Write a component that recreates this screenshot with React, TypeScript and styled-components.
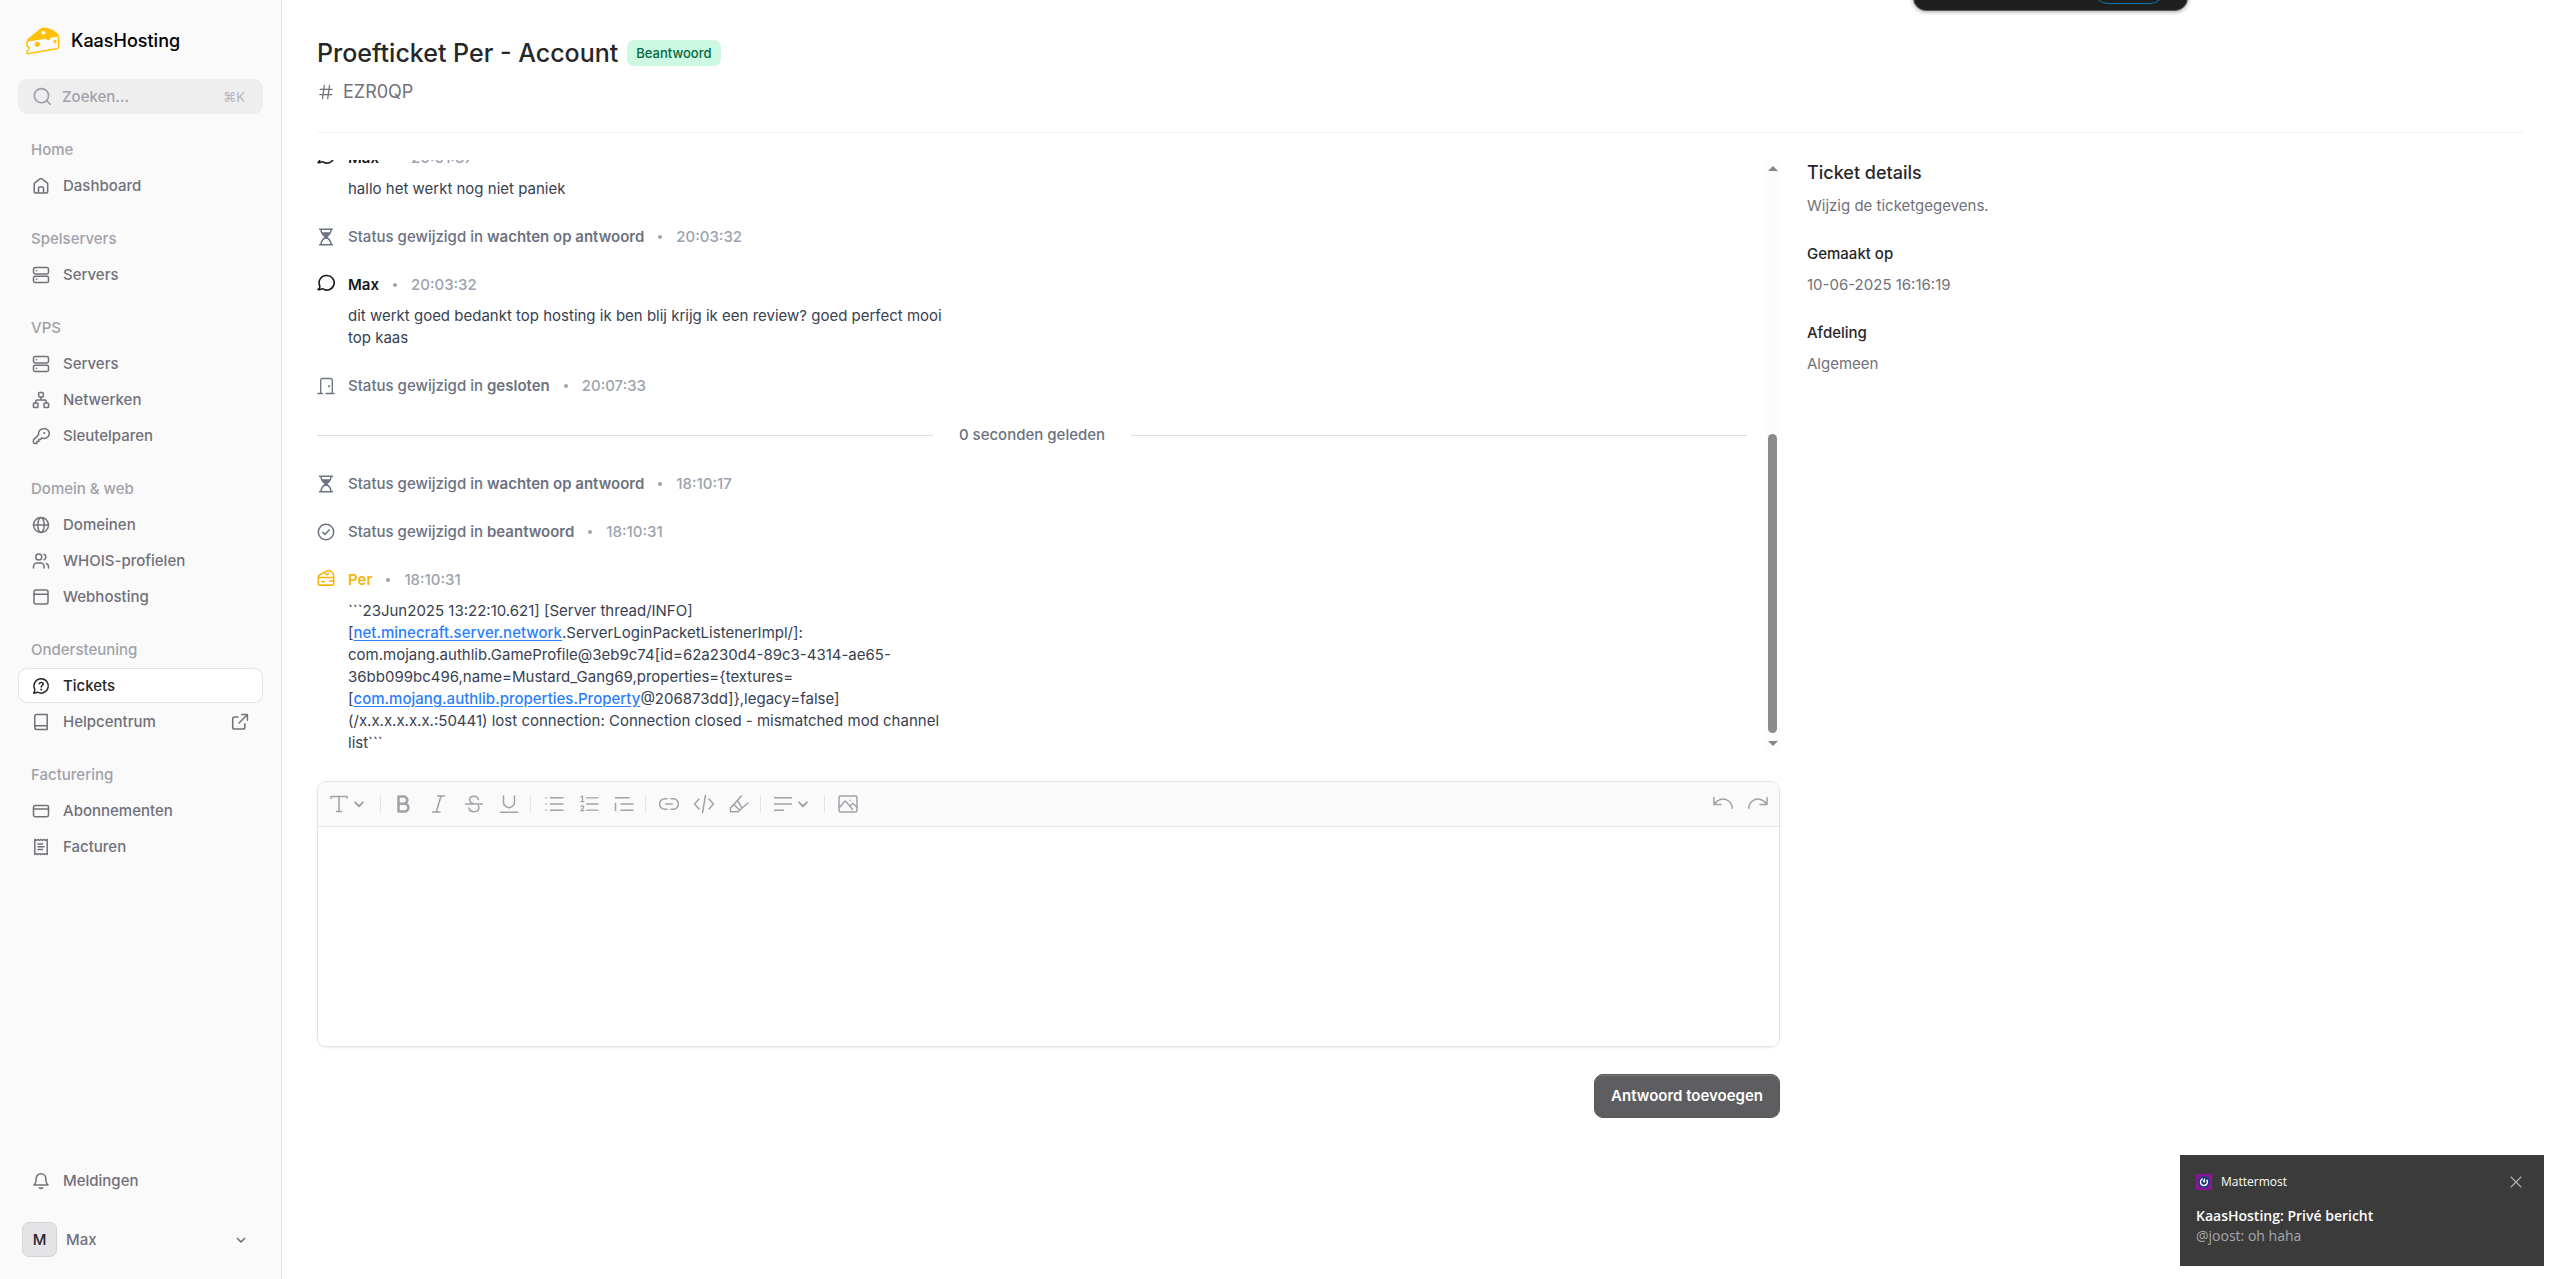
import React from "react";
import styled, { createGlobalStyle, css } from "styled-components";

const color = {
  ink: "#27272a",
  muted: "#71717a",
  faint: "#a1a1aa",
  body: "#374151",
  slate: "#6b7280",
  time: "#9ca3af",
  line: "#e4e4e7",
  panel: "#fafafa",
  cheese: "#f5b50b",
  logo: "#ffc107",
  link: "#2b7fff",
};

const GlobalStyle = createGlobalStyle`
  *, *::before, *::after { box-sizing: border-box; }
  body {
    margin: 0;
    background: #fff;
    color: ${color.ink};
    font-family: Inter, "Liberation Sans", "DejaVu Sans", sans-serif;
    font-size: 15px;
    line-height: 22px;
  }
  h1, h2, p, dl, dt, dd, ul, ol { margin: 0; padding: 0; }
  ul, ol { list-style: none; }
  a { color: inherit; text-decoration: none; }
  button, input, textarea { font: inherit; color: inherit; }
`;

/* ---------- icons ---------- */

const Svg = styled.svg<{ $size?: number }>`
  display: block;
  flex: none;
  width: ${(p) => p.$size ?? 18}px;
  height: ${(p) => p.$size ?? 18}px;
  fill: none;
  stroke: currentColor;
  stroke-width: 1.5;
  stroke-linecap: round;
  stroke-linejoin: round;
`;

const shapes = {
  search: <path d="M15.5 15.5 12.3 12.3M14 7.8a6.4 6.4 0 1 1-12.8 0 6.4 6.4 0 0 1 12.8 0Z" />,
  home: (
    <path d="M2.2 7.2c0-.7.3-1.2.8-1.6l5-3.7c.6-.4 1.3-.4 1.9 0l5 3.7c.5.4.8.9.8 1.6v7c0 1.1-.9 1.9-1.9 1.9H4.1c-1 0-1.9-.8-1.9-1.9ZM6.5 16v-4.700c0-.7.5-1.200 1.200-1.200h2.600c.7 0 1.200.5 1.200 1.200V16" />
  ),
  server: (
    <>
      <rect x="1.500" y="1.600" width="15" height="6.300" rx="1.600" />
      <rect x="1.500" y="10.200" width="15" height="6.300" rx="1.600" />
      <path d="M4.500 4.800h.2M4.500 13.300h.2" />
    </>
  ),
  network: (
    <>
      <rect x="6.700" y="1.400" width="4.600" height="4.600" rx=".9" />
      <rect x="1.400" y="12" width="4.600" height="4.600" rx=".9" />
      <rect x="12" y="12" width="4.600" height="4.600" rx=".9" />
      <path d="M9 6v3M3.700 12v-1.300c0-.9.7-1.600 1.600-1.600h7.400c.9 0 1.600.7 1.600 1.600V12" />
    </>
  ),
  key: (
    <>
      <path d="M11.400 1.700a4.900 4.900 0 0 0-4.800 6L1.900 12.400c-.3.300-.5.700-.5 1.100v1.700c0 .7.500 1.200 1.200 1.200h2.200v-2h2v-2h1.600l1.600-1.600a4.900 4.900 0 1 0 1.400-9.100Z" />
      <path d="M12.200 5.900h.1" strokeWidth="2" />
    </>
  ),
  globe: (
    <>
      <circle cx="9" cy="9" r="7.500" />
      <ellipse cx="9" cy="9" rx="3.200" ry="7.500" />
      <path d="M1.500 9h15" />
    </>
  ),
  users: (
    <>
      <circle cx="6.800" cy="5" r="3" />
      <path d="M1.500 16v-1.500a3.500 3.500 0 0 1 3.500-3.500h3.600a3.500 3.500 0 0 1 3.500 3.500V16M12 2.200a3 3 0 0 1 0 5.600M14.300 11.500c1.400.5 2.200 1.700 2.200 3.100V16" />
    </>
  ),
  browser: (
    <>
      <rect x="2" y="2" width="14" height="14" rx="2" />
      <path d="M2 6.300h14" />
    </>
  ),
  ticket: (
    <>
      <path d="M9.200 1.700a7.200 7.200 0 0 0-6.500 10.400c.4 1.300-.2 3-1.100 4 1.500.1 3-.2 4-.9A7.200 7.200 0 1 0 9.200 1.700Z" />
      <path d="M7.200 6.800c.3-.9 1-1.400 2-1.400 1.100 0 2 .7 2 1.700 0 1.300-1.800 1.400-2 2.800" />
      <path d="M9.200 12.500h.1" strokeWidth="1.900" />
    </>
  ),
  book: <path d="M2.800 14.600V3.500c0-1.100.8-1.900 1.900-1.900h10.500v14.800H4.600a1.800 1.800 0 0 1 0-3.700h10.600" />,
  external: <path d="M10.800 1.600h5.600v5.600M16.200 1.800 8 10M7 3.900H3.600c-1.100 0-1.900.9-1.900 1.900v8.400c0 1.100.8 1.900 1.900 1.900H12c1.100 0 1.900-.8 1.900-1.900v-3.500" />,
  card: (
    <>
      <rect x="1.500" y="3.500" width="15" height="11.200" rx="1.600" />
      <path d="M1.500 7h15" />
    </>
  ),
  receipt: (
    <>
      <path d="M2.800 1.500v15l1.500-.8 1.600.8 1.600-.8 1.500.8 1.600-.8 1.600.8 1.600-.8 1.400.8v-15l-1.400.8-1.600-.8-1.600.8-1.600-.8-1.500.8-1.600-.8-1.600.8Z" />
      <path d="M6 6h4.500M6 8.800h6M6 11.600h4.500" />
    </>
  ),
  bell: <path d="M9 1.700a4.800 4.800 0 0 0-4.800 4.800c0 4-.8 5.400-2.300 6.500h14.200c-1.500-1.100-2.300-2.500-2.300-6.500A4.800 4.800 0 0 0 9 1.700ZM7.400 15.800c.8.900 2.400.9 3.200 0" />,
  chevron: <path d="m5.500 7.500 3.500 3.500 3.500-3.500" strokeWidth="1.700" />,
  hash: <path d="M7.300 2.500 5.500 15.500M12.500 2.500l-1.800 13M3.200 6.300h12M2.800 11.700h12" strokeWidth="1.300" />,
  hourglass: (
    <>
      <path d="M2.600 1.200h12.800M2.600 16.800h12.800M4 1.500c0 4 2 5.700 5 7.500-3 1.800-5 3.500-5 7.500M14 1.500c0 4-2 5.700-5 7.500 3 1.800 5 3.500 5 7.500" />
      <path d="M5 4.300h8c-.7 2-2 3.300-4 4.500-2-1.200-3.300-2.500-4-4.500Z" fill="currentColor" stroke="none" />
    </>
  ),
  chat: <path d="M9.400 1.500a7.300 7.300 0 0 0-6.700 10.300c.3 1.200-.4 2.900-1.600 3.700 1.800.4 3.300 0 4.500-.8a7.300 7.300 0 1 0 3.800-13.200Z" strokeWidth="1.600" />,
  door: (
    <>
      <path d="M3.700 16.300V3.200c0-1 .7-1.700 1.700-1.700h8.200c1 0 1.700.7 1.700 1.700v13.100M1 16.500h4.500M9 16.500h8" strokeWidth="1.300" />
      <path d="M12 9.200h.1" strokeWidth="2" />
    </>
  ),
  check: (
    <>
      <circle cx="9" cy="9" r="7.700" />
      <path d="m5.800 9.200 2.200 2.200 4.300-4.700" />
    </>
  ),
  cheese: (
    <>
      <path d="M1.300 8v6.800c0 .8.600 1.300 1.300 1.300h12.800c.7 0 1.300-.5 1.300-1.300V8M1.300 8.500h15.400M1.300 8.500c0-1.300.8-2.400 2-3l7-3.600c2.600-.8 6.400 1.200 6.400 5v1.600" strokeWidth="1.600" />
      <path d="M8.300 4.500c.4 1.600 2.600 1.600 2.900 0M12.500 12h4M5 12.600h2.200" strokeWidth="1.600" />
    </>
  ),
  type: <path d="M2 4.200V2.500h16v1.700M10 2.500v15M7.500 17.500h5" />,
  bold: <path d="M4.500 2.500h5.200a3.600 3.600 0 0 1 0 7.200H4.500h6a3.900 3.900 0 0 1 0 7.800h-6Z" strokeWidth="2.600" />,
  italic: <path d="M8.500 2h7M3.500 18h7.500M12 2 7.300 18" />,
  strike: <path d="M14.500 5.500C14 3.500 12.300 2.200 10 2.200c-2.700 0-4.400 1.500-4.400 3.500 0 2.200 2 3.300 4.400 4.300M5 14c.4 2.200 2.300 3.700 5 3.700 3 0 4.900-1.500 4.900-3.900 0-.8-.2-1.500-.7-2.100M1.500 10h17" />,
  underline: <path d="M4.500 2v6.200a5.500 5.500 0 0 0 11 0V2M1.500 18.300h17" />,
  bullets: <path d="M6.500 3.800H19M6.500 10H19M6.500 16.200H19M2 3.800h.1M2 10h.1M2 16.200h.1" />,
  numbers: <path d="M7.500 3.800H19M7.500 10H19M7.500 16.200H19M2 3l1.500-1v5.500M2 7.600h3M2 12.500c.5-.9 2.700-.8 2.700.6 0 1-1.800 1.700-2.700 3.500h3" strokeWidth="1.300" />,
  indent: <path d="M1.500 3.800h13.500M7 10h12M7 16.200h12M1.500 9.500v7" />,
  link: <path d="M8 4.800H5.800a5.200 5.200 0 0 0 0 10.400H8M12 4.800h2.200a5.200 5.200 0 0 1 0 10.400H12M6.800 10h6.400" />,
  code: <path d="m5 5-4.500 5L5 15M15 5l4.500 5L15 15M11.500 1.500l-3 17" />,
  marker: <path d="M12.300 2 4.800 10.500M4.800 10.500 1.500 14v3.800h7.600l3-2.800L19 9M4.800 10.500l5 4.800M9 7.500l4 6.300" />,
  align: <path d="M1.500 3.800h17M1.500 10h17M1.500 16.200h9" />,
  image: (
    <>
      <rect x="1" y="2" width="18" height="16" rx="1.500" />
      <path d="m1.500 13.500 5-6c.4-.5 1-.5 1.500 0l6.500 8M12 12l2.200-2c.5-.5 1-.4 1.400 0l3.400 3.500M12.300 6.200h.1" />
    </>
  ),
  undo: <path d="M1 3.500v7h7M1.500 10C4.500 5 10 4 14.500 6.300c3 1.600 4.600 4.200 4.700 8" />,
  redo: <path d="M19 3.500v7h-7M18.500 10C15.500 5 10 4 5.500 6.300c-3 1.600-4.600 4.200-4.700 8" />,
  close: <path d="m1.500 1.500 15 15M16.500 1.500l-15 15" strokeWidth="1.600" />,
};
type IconName = keyof typeof shapes;

const Icon = ({ name, size = 18, box = 18 }: { name: IconName; size?: number; box?: number }) => (
  <Svg $size={size} viewBox={`0 0 ${box} ${box}`} aria-hidden="true">
    {shapes[name]}
  </Svg>
);

/* ---------- sidebar ---------- */

const Shell = styled.div`
  display: flex;
  min-height: 100vh;
`;

const Sidebar = styled.aside`
  position: sticky;
  top: 0;
  display: flex;
  flex: none;
  flex-direction: column;
  width: 282px;
  height: 100vh;
  padding: 18px;
  background: ${color.panel};
  border-right: 1px solid ${color.line};
  font-weight: 500;
`;

const Brand = styled.a`
  display: flex;
  align-items: center;
  gap: 11px;
  height: 45px;
  padding-left: 8px;
  color: #000;
  font-size: 18px;
`;

const Logo = styled.svg`
  width: 34px;
  height: 28px;
`;

const Search = styled.label`
  display: flex;
  align-items: center;
  gap: 9px;
  height: 35px;
  margin: 16px 0 18px;
  padding: 0 18px 0 15px;
  border-radius: 9px;
  background: #eeeeee;
  color: ${color.faint};
`;

const SearchInput = styled.input`
  flex: 1;
  min-width: 0;
  padding: 0;
  border: 0;
  outline: 0;
  background: none;
  &::placeholder {
    color: ${color.faint};
    opacity: 1;
  }
`;

const Shortcut = styled.kbd`
  color: #b4b4ba;
  font: 400 13px Inter, "DejaVu Sans", sans-serif;
`;

const NavGroups = styled.nav`
  display: flex;
  flex-direction: column;
  gap: 18px;
`;

const NavList = styled.ul`
  display: flex;
  flex-direction: column;
  gap: 1px;
`;

const NavLabel = styled.h2`
  padding: 7px 13px;
  color: ${color.faint};
  font-size: 15px;
  font-weight: 500;
  line-height: 22px;
`;

const NavLink = styled.a<{ $active?: boolean }>`
  display: flex;
  align-items: center;
  gap: 13px;
  height: 35px;
  padding: 0 13px;
  border: 1px solid transparent;
  border-radius: 9px;
  color: ${color.muted};
  ${(p) =>
    p.$active &&
    css`
      border-color: ${color.line};
      background: #fff;
      color: ${color.ink};
    `}
`;

const NavText = styled.span`
  flex: 1;
`;

const SidebarFoot = styled.div`
  display: flex;
  flex-direction: column;
  gap: 20px;
  margin-top: auto;
`;

const Profile = styled.button`
  display: flex;
  align-items: center;
  gap: 9px;
  padding: 4px 13px 4px 4px;
  border: 0;
  border-radius: 9px;
  background: none;
  color: ${color.muted};
  font-weight: 500;
  text-align: left;
`;

const Avatar = styled.span`
  display: grid;
  place-items: center;
  width: 35px;
  height: 35px;
  border: 1px solid #d4d4d8;
  border-radius: 7px;
  background: #e4e4e7;
  color: ${color.ink};
`;

type NavItem = { icon: IconName; text: string; active?: boolean; external?: boolean };
const nav: { label: string; items: NavItem[] }[] = [
  { label: "Home", items: [{ icon: "home", text: "Dashboard" }] },
  { label: "Spelservers", items: [{ icon: "server", text: "Servers" }] },
  {
    label: "VPS",
    items: [
      { icon: "server", text: "Servers" },
      { icon: "network", text: "Netwerken" },
      { icon: "key", text: "Sleutelparen" },
    ],
  },
  {
    label: "Domein & web",
    items: [
      { icon: "globe", text: "Domeinen" },
      { icon: "users", text: "WHOIS-profielen" },
      { icon: "browser", text: "Webhosting" },
    ],
  },
  {
    label: "Ondersteuning",
    items: [
      { icon: "ticket", text: "Tickets", active: true },
      { icon: "book", text: "Helpcentrum", external: true },
    ],
  },
  {
    label: "Facturering",
    items: [
      { icon: "card", text: "Abonnementen" },
      { icon: "receipt", text: "Facturen" },
    ],
  },
];

const CheeseLogo = () => (
  <Logo viewBox="0 0 34 28" aria-hidden="true">
    <path
      fill={color.logo}
      fillRule="evenodd"
      d="M1 12.500 14.500 1.500c1.300-1 3-1.200 4.800-.9 6 1 12.700 4.600 14 8.900L24.500 10.800c.3 2.700-3.700 3.400-4.200.9L1 14.800ZM17.500 4c-2.800 0-2.800 3.400 0 3.400s2.800-3.400 0-3.400Z"
    />
    <path
      fill="none"
      stroke={color.logo}
      strokeWidth="1.500"
      strokeLinejoin="round"
      d="M1 14v5.200c2.800.3 3.200 3.300.1 4.300v3.300L31 21.800c1.200-.3 1.600-.8 1.600-2V9.500"
    />
    <circle cx="11.300" cy="17.300" r="2.600" fill={color.logo} />
    <circle cx="29" cy="14.600" r="1.600" fill={color.logo} />
  </Logo>
);

/* ---------- page header ---------- */

const Main = styled.main`
  flex: 1;
  min-width: 0;
  padding: 35px;
`;

const PageHead = styled.header`
  padding-bottom: 26px;
  border-bottom: 1px solid #f4f4f5;
`;

const TitleRow = styled.div`
  display: flex;
  align-items: center;
  gap: 9px;
`;

const Title = styled.h1`
  font-size: 25px;
  font-weight: 500;
  line-height: 36px;
`;

const Badge = styled.span`
  padding: 2px 9px;
  border-radius: 7px;
  background: #cdf8e2;
  color: #05693f;
  font-size: 13px;
  font-weight: 500;
`;

const TicketCode = styled.p`
  display: flex;
  align-items: center;
  gap: 8px;
  margin-top: 7px;
  color: ${color.muted};
  font-size: 18px;
  line-height: 28px;
`;

const Columns = styled.div`
  display: grid;
  grid-template-columns: repeat(3, minmax(0, 1fr));
  gap: 27px;
  padding-top: 27px;
`;

const Conversation = styled.section`
  grid-column: span 2;
`;

/* ---------- history ---------- */

const HistoryFrame = styled.div`
  display: flex;
  gap: 18px;
  height: 594px;
`;

const HistoryScroll = styled.div`
  display: flex;
  flex: 1;
  flex-direction: column-reverse;
  min-width: 0;
  overflow-y: auto;
  scrollbar-width: none;
`;

const History = styled.ol`
  display: flex;
  flex-direction: column;
  gap: 26px;
`;

const Entry = styled.li`
  display: flex;
  gap: 13px;
`;

const EntryMark = styled.span<{ $tone?: string; $raised?: boolean }>`
  display: block;
  padding-top: ${(p) => (p.$raised ? 0 : 2)}px;
  color: ${(p) => p.$tone ?? color.slate};
`;

const EntryHead = styled.div`
  display: flex;
  align-items: center;
  gap: 14px;
  color: ${color.slate};
  font-weight: 500;
  &::before {
    content: "";
    order: 1;
    width: 4px;
    height: 4px;
    border-radius: 2px;
    background: ${color.time};
  }
`;

const Author = styled.strong<{ $staff?: boolean }>`
  color: ${(p) => (p.$staff ? color.cheese : "#18181b")};
  font-weight: 600;
`;

const StatusText = styled.span`
  b {
    font-weight: 600;
  }
`;

const Time = styled.time`
  order: 2;
  color: ${color.time};
`;

const MessageBody = styled.p`
  max-width: 616px;
  margin-top: 9px;
  color: ${color.body};
  a {
    color: ${color.link};
    font-weight: 500;
    text-decoration: underline;
    text-underline-offset: 2px;
  }
`;

const Divider = styled.li`
  display: flex;
  align-items: center;
  gap: 26px;
  color: ${color.slate};
  font-weight: 500;
  line-height: 24px;
  &::before,
  &::after {
    content: "";
    flex: 1;
    height: 1px;
    background: #dcdcdf;
  }
`;

const Rail = styled.div`
  display: flex;
  flex: none;
  flex-direction: column;
  align-items: center;
  width: 15px;
  height: 592px;
  padding: 6px 0;
  background: #fcfcfc;
`;

const Thumb = styled.div`
  width: 9px;
  height: 299px;
  margin: auto 0 8px;
  border-radius: 5px;
  background: #8b8b8b;
`;

const Arrow = styled.span<{ $down?: boolean }>`
  width: 0;
  height: 0;
  border: solid transparent;
  border-width: ${(p) => (p.$down ? "5px 5px 0" : "0 5px 5px")};
  border-color: #858585 transparent;
`;

const Status = ({ icon, value, time }: { icon: IconName; value: string; time: string }) => (
  <Entry>
    <EntryMark>
      <Icon name={icon} />
    </EntryMark>
    <EntryHead>
      <StatusText>
        Status gewijzigd in <b>{value}</b>
      </StatusText>
      <Time>{time}</Time>
    </EntryHead>
  </Entry>
);

const Message = (p: { author: string; time: string; staff?: boolean; children: React.ReactNode }) => (
  <Entry>
    <EntryMark $tone={p.staff ? color.cheese : "#18181b"} $raised>
      <Icon name={p.staff ? "cheese" : "chat"} />
    </EntryMark>
    <div>
      <EntryHead>
        <Author $staff={p.staff}>{p.author}</Author>
        <Time>{p.time}</Time>
      </EntryHead>
      <MessageBody>{p.children}</MessageBody>
    </div>
  </Entry>
);

/* ---------- editor ---------- */

const Editor = styled.div`
  display: flex;
  flex-direction: column;
  margin-top: 27px;
  overflow: hidden;
  border: 1px solid ${color.line};
  border-radius: 9px;
  box-shadow: 0 1px 2px rgba(0, 0, 0, 0.08);
`;

const Toolbar = styled.div`
  display: flex;
  align-items: center;
  height: 45px;
  padding: 0 4px;
  background: ${color.panel};
  border-bottom: 1px solid ${color.line};
`;

const Tool = styled.button<{ $wide?: boolean }>`
  display: flex;
  align-items: center;
  justify-content: center;
  width: ${(p) => (p.$wide ? 54 : 35)}px;
  height: 35px;
  padding: 0;
  border: 0;
  border-radius: 7px;
  background: none;
  color: ${color.faint};
`;

const ToolDivider = styled.span`
  width: 1px;
  height: 18px;
  margin: 0 5px 0 4px;
  background: ${color.line};
`;

const Spacer = styled.span`
  flex: 1;
`;

const Draft = styled.textarea`
  display: block;
  width: 100%;
  height: 219px;
  padding: 13px;
  border: 0;
  outline: 0;
  background: #fff;
  resize: none;
`;

const Actions = styled.div`
  display: flex;
  justify-content: flex-end;
  margin-top: 27px;
`;

const Submit = styled.button`
  height: 44px;
  padding: 0 16px;
  border: 1px solid #58585a;
  border-radius: 9px;
  background: #5e5e60;
  box-shadow: inset 0 1px 0 #78787a;
  color: #fff;
  font-weight: 600;
`;

const tools: { name: IconName; label: string; menu?: boolean }[][] = [
  [{ name: "type", label: "Tekststijl", menu: true }],
  [
    { name: "bold", label: "Vet" },
    { name: "italic", label: "Cursief" },
    { name: "strike", label: "Doorhalen" },
    { name: "underline", label: "Onderstrepen" },
  ],
  [
    { name: "bullets", label: "Opsomming" },
    { name: "numbers", label: "Genummerde lijst" },
    { name: "indent", label: "Citaat" },
  ],
  [
    { name: "link", label: "Link" },
    { name: "code", label: "Code" },
    { name: "marker", label: "Markeren" },
  ],
  [{ name: "align", label: "Uitlijnen", menu: true }],
  [{ name: "image", label: "Afbeelding" }],
];

/* ---------- details ---------- */

const Details = styled.section`
  color: ${color.muted};
`;

const DetailsTitle = styled.h2`
  color: ${color.ink};
  font-size: 18px;
  font-weight: 500;
  line-height: 26px;
`;

const DetailsIntro = styled.p`
  margin-top: 9px;
`;

const Facts = styled.dl`
  dt {
    margin-top: 26px;
    color: ${color.ink};
    font-weight: 500;
  }
  dd {
    margin-top: 9px;
  }
`;

/* ---------- overlays ---------- */

const TopPill = styled.div`
  position: fixed;
  top: -33px;
  right: 372px;
  display: flex;
  justify-content: flex-end;
  width: 275px;
  height: 44px;
  padding: 0 22px 6px 0;
  border: 1px solid #5a5654;
  border-radius: 13px;
  background: #1f1f1f;
  box-shadow: 0 1px 4px rgba(0, 0, 0, 0.35);
`;

const PillOutline = styled.span`
  width: 72px;
  border: 1px solid #0b78ad;
  border-radius: 15px;
`;

const Toast = styled.aside`
  position: fixed;
  right: 16px;
  bottom: 13px;
  width: 364px;
  height: 111px;
  padding: 17px 16px;
  background: #3b3b3b;
  color: #fff;
  font-family: "Open Sans", "Noto Sans", sans-serif;
  font-size: 14px;
  line-height: 20px;
`;

const ToastHead = styled.div`
  display: flex;
  align-items: center;
  gap: 9px;
  height: 20px;
  margin-bottom: 14px;
  font-size: 12px;
`;

const ToastClose = styled.button`
  margin-left: auto;
  padding: 0 6px;
  border: 0;
  background: none;
  color: #b5b5b5;
`;

const ToastTitle = styled.strong`
  display: block;
  font-weight: 600;
`;

const ToastText = styled.p`
  color: #a8a8a8;
`;

const MattermostMark = () => (
  <svg width="16" height="16" viewBox="0 0 16 16" aria-hidden="true">
    <rect width="16" height="16" fill="#881798" />
    <circle cx="8" cy="8" r="6" fill="#1e3a7c" />
    <path d="M6.800 4.700a3.500 3.500 0 1 0 3.800 1" fill="none" stroke="#fff" strokeWidth="1.400" />
    <path d="M9 3.800v3.600c0 1.300-1.900 1.300-1.900 0C7.100 6.200 8.300 5 9 3.800Z" fill="#fff" />
  </svg>
);

export default function App() {
  return (
    <>
      <GlobalStyle />
      <Shell>
        <Sidebar>
          <Brand href="#">
            <CheeseLogo />
            KaasHosting
          </Brand>
          <Search>
            <Icon name="search" size={20} />
            <SearchInput type="text" placeholder="Zoeken..." aria-label="Zoeken" />
            <Shortcut>⌘K</Shortcut>
          </Search>
          <NavGroups>
            {nav.map((group) => (
              <div key={group.label}>
                <NavLabel>{group.label}</NavLabel>
                <NavList>
                  {group.items.map((item) => (
                    <li key={item.text}>
                      <NavLink href="#" $active={item.active}>
                        <Icon name={item.icon} />
                        <NavText>{item.text}</NavText>
                        {item.external && <Icon name="external" />}
                      </NavLink>
                    </li>
                  ))}
                </NavList>
              </div>
            ))}
          </NavGroups>
          <SidebarFoot>
            <NavLink href="#">
              <Icon name="bell" />
              <NavText>Meldingen</NavText>
            </NavLink>
            <Profile type="button">
              <Avatar>M</Avatar>
              <NavText>Max</NavText>
              <Icon name="chevron" />
            </Profile>
          </SidebarFoot>
        </Sidebar>

        <Main>
          <PageHead>
            <TitleRow>
              <Title>Proefticket Per - Account</Title>
              <Badge>Beantwoord</Badge>
            </TitleRow>
            <TicketCode>
              <Icon name="hash" />
              EZR0QP
            </TicketCode>
          </PageHead>

          <Columns>
            <Conversation>
              <HistoryFrame>
                <HistoryScroll>
                  <History>
                    <Message author="Max" time="20:01:37">
                      hallo het werkt nog niet paniek
                    </Message>
                    <Status icon="hourglass" value="wachten op antwoord" time="20:03:32" />
                    <Message author="Max" time="20:03:32">
                      dit werkt goed bedankt top hosting ik ben blij krijg ik een review? goed perfect mooi top kaas
                    </Message>
                    <Status icon="door" value="gesloten" time="20:07:33" />
                    <Divider>0 seconden geleden</Divider>
                    <Status icon="hourglass" value="wachten op antwoord" time="18:10:17" />
                    <Status icon="check" value="beantwoord" time="18:10:31" />
                    <Message author="Per" time="18:10:31" staff>
                      ```23Jun2025 13:22:10.621] [Server thread/INFO] [<a href="#">net.minecraft.server.network</a>
                      .ServerLoginPacketListenerImpl/]:
                      com.mojang.authlib.GameProfile@3eb9c74[id=62a230d4-89c3-4314-ae65-36bb099bc496,name=Mustard_Gang69,properties=&#123;textures=[
                      <a href="#">com.mojang.authlib.properties.Property</a>@206873dd]&#125;,legacy=false]
                      (/x.x.x.x.x.x.:50441) lost connection: Connection closed - mismatched mod channel list```
                    </Message>
                  </History>
                </HistoryScroll>
                <Rail aria-hidden="true">
                  <Arrow />
                  <Thumb />
                  <Arrow $down />
                </Rail>
              </HistoryFrame>

              <Editor>
                <Toolbar role="toolbar" aria-label="Opmaak">
                  {tools.map((group, i) => (
                    <React.Fragment key={i}>
                      {i > 0 && <ToolDivider />}
                      {group.map((tool) => (
                        <Tool key={tool.name} type="button" aria-label={tool.label} $wide={tool.menu}>
                          <Icon name={tool.name} size={20} box={20} />
                          {tool.menu && <Icon name="chevron" size={20} />}
                        </Tool>
                      ))}
                    </React.Fragment>
                  ))}
                  <Spacer />
                  <Tool type="button" aria-label="Ongedaan maken">
                    <Icon name="undo" size={20} box={20} />
                  </Tool>
                  <Tool type="button" aria-label="Opnieuw">
                    <Icon name="redo" size={20} box={20} />
                  </Tool>
                </Toolbar>
                <Draft aria-label="Antwoord" />
              </Editor>
              <Actions>
                <Submit type="button">Antwoord toevoegen</Submit>
              </Actions>
            </Conversation>

            <Details>
              <DetailsTitle>Ticket details</DetailsTitle>
              <DetailsIntro>Wijzig de ticketgegevens.</DetailsIntro>
              <Facts>
                <dt>Gemaakt op</dt>
                <dd>10-06-2025 16:16:19</dd>
                <dt>Afdeling</dt>
                <dd>Algemeen</dd>
              </Facts>
            </Details>
          </Columns>
        </Main>
      </Shell>

      <TopPill>
        <PillOutline />
      </TopPill>

      <Toast>
        <ToastHead>
          <MattermostMark />
          Mattermost
          <ToastClose type="button" aria-label="Sluiten">
            <Icon name="close" size={12} />
          </ToastClose>
        </ToastHead>
        <ToastTitle>KaasHosting: Privé bericht</ToastTitle>
        <ToastText>@joost: oh haha</ToastText>
      </Toast>
    </>
  );
}
